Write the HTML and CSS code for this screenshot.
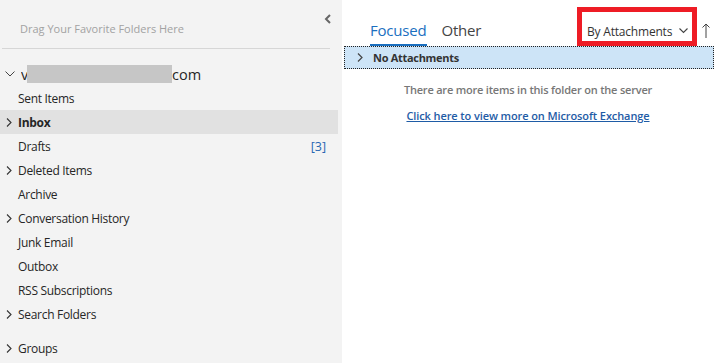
FILE: index.html
```html
<!DOCTYPE html>
<html>
<head>
<meta charset="utf-8">
<link rel="stylesheet" href="styles.css">
</head>
<body>
<div class="app">
  <aside class="nav">
    <div class="fav">
      <span class="collapse"><svg width="8" height="10" viewBox="0 0 8 10"><path d="M6 1 L2 5 L6 9" fill="none" stroke="#666" stroke-width="2"/></svg></span>
      <div class="fav-text">Drag Your Favorite Folders Here</div>
    </div>
    <div class="sep"></div>
    <div class="account">
      <span class="chev-down"><svg width="10" height="6" viewBox="0 0 10 6"><path d="M0.5 0.5 L5 5 L9.5 0.5" fill="none" stroke="#444" stroke-width="1"/></svg></span>
      <span class="acct-v">v</span><span class="redact"></span><span class="acct-com">com</span>
    </div>
    <ul class="folders">
      <li class="row"><span class="chev"></span><span class="name">Sent Items</span></li>
      <li class="row selected"><span class="chev"><svg width="6" height="9" viewBox="0 0 6 9"><path d="M1 0.5 L5 4.5 L1 8.5" fill="none" stroke="#333" stroke-width="1.1"/></svg></span><span class="name bold">Inbox</span></li>
      <li class="row"><span class="chev"></span><span class="name">Drafts</span><span class="count">[3]</span></li>
      <li class="row"><span class="chev"><svg width="6" height="9" viewBox="0 0 6 9"><path d="M1 0.5 L5 4.5 L1 8.5" fill="none" stroke="#333" stroke-width="1.1"/></svg></span><span class="name">Deleted Items</span></li>
      <li class="row"><span class="chev"></span><span class="name">Archive</span></li>
      <li class="row"><span class="chev"><svg width="6" height="9" viewBox="0 0 6 9"><path d="M1 0.5 L5 4.5 L1 8.5" fill="none" stroke="#333" stroke-width="1.1"/></svg></span><span class="name">Conversation History</span></li>
      <li class="row"><span class="chev"></span><span class="name">Junk Email</span></li>
      <li class="row"><span class="chev"></span><span class="name">Outbox</span></li>
      <li class="row"><span class="chev"></span><span class="name">RSS Subscriptions</span></li>
      <li class="row"><span class="chev"><svg width="6" height="9" viewBox="0 0 6 9"><path d="M1 0.5 L5 4.5 L1 8.5" fill="none" stroke="#333" stroke-width="1.1"/></svg></span><span class="name">Search Folders</span></li>
    </ul>
    <div class="row groups"><span class="chev"><svg width="6" height="9" viewBox="0 0 6 9"><path d="M1 0.5 L5 4.5 L1 8.5" fill="none" stroke="#333" stroke-width="1.1"/></svg></span><span class="name">Groups</span></div>
  </aside>
  <main class="list">
    <div class="tabs">
      <div class="tab active">Focused</div>
      <div class="tab">Other</div>
      <div class="spacer"></div>
      <div class="sort"><span>By Attachments</span><svg width="9" height="6" viewBox="0 0 9 6"><path d="M0.5 0.5 L4.5 4.5 L8.5 0.5" fill="none" stroke="#444" stroke-width="1.1"/></svg></div>
      <div class="arrow"><svg width="8" height="15" viewBox="0 0 8 15"><path d="M4 1 V15 M0.5 4.5 L4 1 L7.5 4.5" fill="none" stroke="#444" stroke-width="1"/></svg></div>
    </div>
    <div class="group">
      <span class="gchev"><svg width="6" height="9" viewBox="0 0 6 9"><path d="M1 0.5 L5 4.5 L1 8.5" fill="none" stroke="#444" stroke-width="1.2"/></svg></span>
      <span class="gname">No Attachments</span>
    </div>
    <div class="more">There are more items in this folder on the server</div>
    <a class="link" href="#">Click here to view more on Microsoft Exchange</a>
  </main>
</div>
</body>
</html>
```

FILE: styles.css
```css
* { box-sizing: border-box; }
html, body { margin: 0; padding: 0; }
body {
  width: 714px;
  height: 363px;
  overflow: hidden;
  font-family: "Open Sans", "Noto Sans", sans-serif;
  color: #262626;
  background: #fff;
}
.app { display: flex; height: 363px; }
.nav {
  width: 342px;
  flex: none;
  background: #f3f3f3;
  display: flex;
  flex-direction: column;
}
.fav { height: 48px; position: relative; }
.collapse { position: absolute; left: 324px; top: 7px; }
.fav-text {
  padding: 21px 0 0 20px;
  font-size: 11px;
  color: #a2a2a2;
}
.sep { height: 1px; background: #d6d6d6; margin: 0 12px 0 2px; }
.account {
  margin-top: 13px;
  height: 24px;
  display: flex;
  align-items: center;
  font-size: 14.5px;
  color: #262626;
}
.chev-down { width: 21px; padding-left: 5px; display: flex; align-items: center; }
.acct-v { width: 6px; overflow: hidden; }
.redact { width: 145px; height: 18px; background: #c6c6c6; }
.folders { list-style: none; margin: 0; padding: 0; }
.row {
  height: 24px;
  display: flex;
  align-items: center;
  font-size: 12px;
  width: 338px;
  padding-right: 12px;
}
.row.selected { background: #e1e1e1; }
.chev { width: 18px; flex: none; display: flex; align-items: center; padding-left: 6px; }
.name { flex: 1; letter-spacing: -0.3px; }
.name.bold { font-weight: 700; }
.count { color: #2867b2; font-size: 12.5px; }
.groups { margin-top: 10px; }
.list { flex: 1; display: flex; flex-direction: column; }
.tabs { height: 46px; display: flex; align-items: flex-end; padding-left: 28px; }
.tab {
  font-size: 15px;
  color: #444;
  height: 30px;
  line-height: 28px;
  margin-right: 16px;
  letter-spacing: -0.2px;
  border-bottom: 2px solid transparent;
}
.tab.active { color: #1a6fbf; border-bottom-color: #1a6fbf; margin-right: 15px; }
.spacer { flex: 1; }
.sort {
  height: 39px;
  width: 120px;
  border: 5px solid #ee1c25;
  display: flex;
  align-items: center;
  padding: 9px 0 0 5px;
  gap: 7px;
  font-size: 12px;
  color: #333;
  letter-spacing: -0.2px;
}
.arrow { width: 17px; height: 39px; display: flex; align-items: center; justify-content: center; padding-top: 7px; }
.group {
  margin-left: 2px;
  height: 23px;
  background: #cde4f7;
  border: 1px dotted #222;
  display: flex;
  align-items: center;
  font-size: 11px;
  color: #333;
}
.gchev { padding-left: 12px; width: 28px; display: flex; align-items: center; }
.gname { font-weight: 700; letter-spacing: -0.3px; }
.more {
  margin-top: 13px;
  text-align: center;
  font-size: 11px;
  color: #777;
  font-weight: 600;
  letter-spacing: -0.2px;
}
.link {
  margin-top: 11px;
  text-align: center;
  font-size: 11px;
  color: #1f5ca6;
  font-weight: 600;
  text-decoration: underline;
  letter-spacing: -0.1px;
}
```
